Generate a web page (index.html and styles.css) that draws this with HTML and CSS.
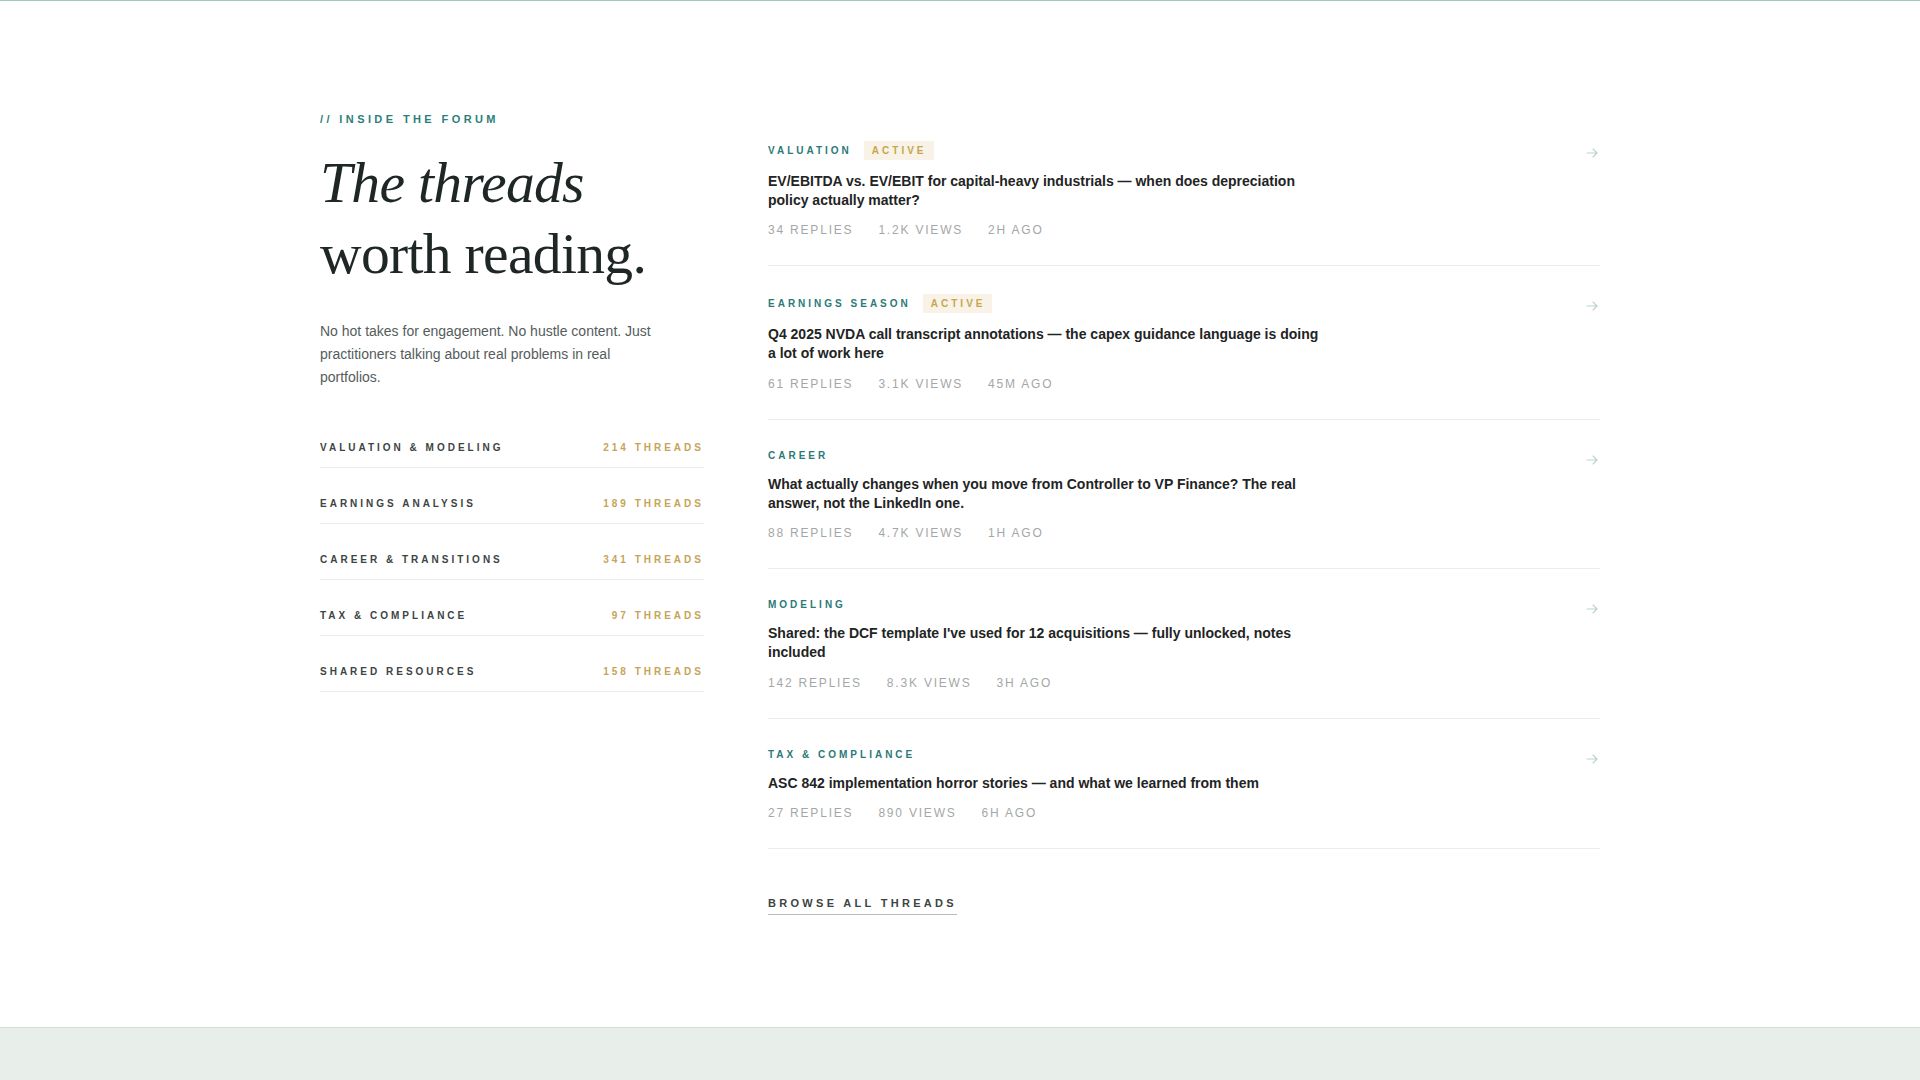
FILE: index.html
```html
<!DOCTYPE html>
<html lang="en">
<head>
<meta charset="utf-8">
<title>Inside the forum</title>
<link rel="stylesheet" href="styles.css">
</head>
<body>
<section class="forum">
  <div class="forum__inner">
    <aside class="intro">
      <p class="eyebrow">// Inside the forum</p>
      <h2 class="intro__title"><em>The threads</em><br>worth reading.</h2>
      <p class="intro__lede">No hot takes for engagement. No hustle content. Just practitioners talking about real problems in real portfolios.</p>
      <ul class="cats">
        <li class="cat"><span class="cat__name">Valuation &amp; Modeling</span><span class="cat__count">214 threads</span></li>
        <li class="cat"><span class="cat__name">Earnings Analysis</span><span class="cat__count">189 threads</span></li>
        <li class="cat"><span class="cat__name">Career &amp; Transitions</span><span class="cat__count">341 threads</span></li>
        <li class="cat"><span class="cat__name">Tax &amp; Compliance</span><span class="cat__count">97 threads</span></li>
        <li class="cat"><span class="cat__name">Shared Resources</span><span class="cat__count">158 threads</span></li>
      </ul>
    </aside>

    <div class="threads">
      <article class="thread">
        <div class="thread__body">
          <div class="thread__tags"><span class="tag">Valuation</span><span class="badge">Active</span></div>
          <h3 class="thread__title">EV/EBITDA vs. EV/EBIT for capital-heavy industrials — when does depreciation policy actually matter?</h3>
          <div class="meta"><span>34 replies</span><span>1.2K views</span><span>2h ago</span></div>
        </div>
        <svg class="arrow" width="14" height="10" viewBox="0 0 14 10"><path d="M1 5h10M7 1l4 4-4 4"/></svg>
      </article>

      <article class="thread">
        <div class="thread__body">
          <div class="thread__tags"><span class="tag">Earnings Season</span><span class="badge">Active</span></div>
          <h3 class="thread__title">Q4 2025 NVDA call transcript annotations — the capex guidance language is doing a lot of work here</h3>
          <div class="meta"><span>61 replies</span><span>3.1K views</span><span>45m ago</span></div>
        </div>
        <svg class="arrow" width="14" height="10" viewBox="0 0 14 10"><path d="M1 5h10M7 1l4 4-4 4"/></svg>
      </article>

      <article class="thread">
        <div class="thread__body">
          <div class="thread__tags"><span class="tag">Career</span></div>
          <h3 class="thread__title">What actually changes when you move from Controller to VP Finance? The real answer, not the LinkedIn one.</h3>
          <div class="meta"><span>88 replies</span><span>4.7K views</span><span>1h ago</span></div>
        </div>
        <svg class="arrow" width="14" height="10" viewBox="0 0 14 10"><path d="M1 5h10M7 1l4 4-4 4"/></svg>
      </article>

      <article class="thread">
        <div class="thread__body">
          <div class="thread__tags"><span class="tag">Modeling</span></div>
          <h3 class="thread__title">Shared: the DCF template I've used for 12 acquisitions — fully unlocked, notes included</h3>
          <div class="meta"><span>142 replies</span><span>8.3K views</span><span>3h ago</span></div>
        </div>
        <svg class="arrow" width="14" height="10" viewBox="0 0 14 10"><path d="M1 5h10M7 1l4 4-4 4"/></svg>
      </article>

      <article class="thread">
        <div class="thread__body">
          <div class="thread__tags"><span class="tag">Tax &amp; Compliance</span></div>
          <h3 class="thread__title">ASC 842 implementation horror stories — and what we learned from them</h3>
          <div class="meta"><span>27 replies</span><span>890 views</span><span>6h ago</span></div>
        </div>
        <svg class="arrow" width="14" height="10" viewBox="0 0 14 10"><path d="M1 5h10M7 1l4 4-4 4"/></svg>
      </article>

      <a class="browse" href="#">Browse all threads</a>
    </div>
  </div>
</section>
<footer class="site-footer"></footer>
</body>
</html>
```

FILE: styles.css
```css
* { box-sizing: border-box; }

html, body {
  margin: 0;
  padding: 0;
  background: #ffffff;
  font-family: "Liberation Sans", Arial, sans-serif;
  color: #1f2626;
}

/* Section shell */
.forum {
  border-top: 1px solid #a2c8bf;
  padding: 112px 0 112px;
}

.forum__inner {
  width: 1280px;
  margin: 0 auto;
  display: grid;
  grid-template-columns: 384px 1fr;
  column-gap: 64px;
  align-items: start;
}

/* Left column */
.eyebrow {
  margin: 0;
  font-size: 11px;
  line-height: 13px;
  font-weight: 700;
  letter-spacing: 3.4px;
  text-transform: uppercase;
  color: #2b7f7b;
}

.intro__title {
  margin: 21px 0 0;
  font-family: "Liberation Serif", "Times New Roman", serif;
  font-weight: 400;
  font-size: 57.6px;
  line-height: 71px;
  letter-spacing: -0.012em;
  color: #1f2626;
}

.intro__title em {
  font-style: italic;
}

.intro__lede {
  margin: 31px 0 0;
  max-width: 340px;
  font-size: 14px;
  line-height: 23px;
  color: #555c5c;
}

.cats {
  list-style: none;
  margin: 23px 0 0;
  padding: 0;
}

.cat {
  display: flex;
  justify-content: space-between;
  align-items: center;
  padding: 28px 0 12px;
  border-bottom: 1px solid #eaeded;
  font-size: 10px;
  line-height: 15px;
  font-weight: 700;
  letter-spacing: 3px;
  text-transform: uppercase;
}

.cat__name { color: #3c4444; }
.cat__count { color: #c6a458; }

/* Right column: thread list */
.thread {
  display: flex;
  justify-content: space-between;
  align-items: flex-start;
  padding: 28px 0 27px;
  border-bottom: 1px solid #ebeded;
}

.thread__body {
  max-width: 560px;
}

.thread__tags {
  display: flex;
  align-items: center;
  gap: 12px;
  min-height: 15px;
}

.tag,
.badge {
  font-size: 10px;
  line-height: 15px;
  font-weight: 700;
  letter-spacing: 3px;
  text-transform: uppercase;
}

.tag { color: #2b7a77; }

.badge {
  padding: 2px 7px 2px 8px;
  background: #f8f3e6;
  color: #c9a550;
}

.thread__title {
  margin: 12px 0 0;
  font-size: 14px;
  line-height: 19px;
  font-weight: 700;
  color: #1f2424;
}

.meta {
  display: flex;
  gap: 25px;
  margin-top: 13.4px;
  font-size: 12px;
  line-height: 15px;
  letter-spacing: 1.8px;
  text-transform: uppercase;
  color: #a4a7a7;
}

.arrow {
  flex: none;
  margin-top: 7px;
}

.arrow path {
  fill: none;
  stroke: #b8d5d0;
  stroke-width: 1.1;
  stroke-linecap: round;
  stroke-linejoin: round;
}

.browse {
  display: inline-block;
  margin-top: 48px;
  padding-bottom: 4px;
  border-bottom: 1px solid #b7bdbd;
  font-size: 11px;
  line-height: 13px;
  font-weight: 700;
  letter-spacing: 3.3px;
  text-transform: uppercase;
  color: #3c4444;
  text-decoration: none;
}

/* Footer band */
.site-footer {
  border-top: 1px solid #d5dbd8;
  background: #e8eeea;
  height: 160px;
}
```
